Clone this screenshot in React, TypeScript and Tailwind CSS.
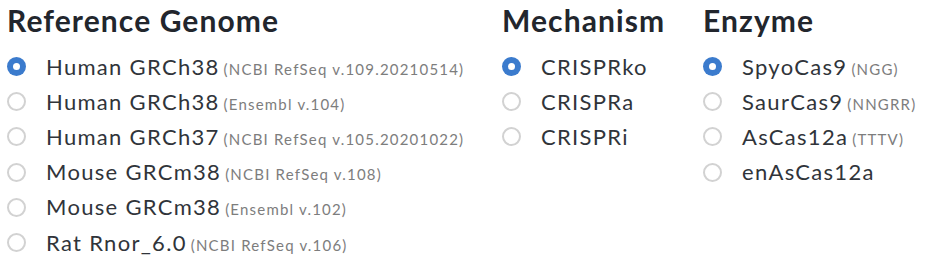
import React, { useState } from 'react';

interface Option {
  value: string;
  label: string;
  note?: string;
}

const genomeOptions: Option[] = [
  { value: 'grch38-ncbi', label: 'Human GRCh38', note: '(NCBI RefSeq v.109.20210514)' },
  { value: 'grch38-ens', label: 'Human GRCh38', note: '(Ensembl v.104)' },
  { value: 'grch37-ncbi', label: 'Human GRCh37', note: '(NCBI RefSeq v.105.20201022)' },
  { value: 'grcm38-ncbi', label: 'Mouse GRCm38', note: '(NCBI RefSeq v.108)' },
  { value: 'grcm38-ens', label: 'Mouse GRCm38', note: '(Ensembl v.102)' },
  { value: 'rnor6', label: 'Rat Rnor_6.0', note: '(NCBI RefSeq v.106)' }
];

const mechanismOptions: Option[] = [
  { value: 'ko', label: 'CRISPRko' },
  { value: 'a', label: 'CRISPRa' },
  { value: 'i', label: 'CRISPRi' }
];

const enzymeOptions: Option[] = [
  { value: 'spyo', label: 'SpyoCas9', note: '(NGG)' },
  { value: 'saur', label: 'SaurCas9', note: '(NNGRR)' },
  { value: 'as', label: 'AsCas12a', note: '(TTTV)' },
  { value: 'enas', label: 'enAsCas12a' }
];

function RadioGroup({
  title,
  options,
  value,
  onChange,
  className
}: {
  title: string;
  options: Option[];
  value: string;
  onChange: (v: string) => void;
  className?: string;
}) {
  return (
    <div className={className}>
      <h2 className="text-[30px] font-bold leading-[34px] tracking-[1.1px] text-[#22262d]">{title}</h2>
      <div className="mt-[12px] flex flex-col">
        {options.map((opt) => {
          const checked = opt.value === value;
          return (
            <label
              key={opt.value}
              className="flex h-[35.2px] cursor-pointer items-center"
              onClick={() => onChange(opt.value)}
            >
              {checked ? (
                <span className="flex h-[19px] w-[19px] shrink-0 items-center justify-center rounded-full bg-[#3b7bcd]">
                  <span className="h-[7px] w-[7px] rounded-full bg-white" />
                </span>
              ) : (
                <span className="h-[19px] w-[19px] shrink-0 rounded-full border-2 border-[#d2d2d2] bg-white" />
              )}
              <span className="ml-[20px] whitespace-nowrap text-[22px] leading-none tracking-[1.3px] text-[#30343a]">
                {opt.label}
                {opt.note && (
                  <span className="ml-[4px] text-[15px] tracking-[1.2px] text-[#7d7d7d]">{opt.note}</span>
                )}
              </span>
            </label>
          );
        })}
      </div>
    </div>
  );
}

export default function App() {
  const [genome, setGenome] = useState('grch38-ncbi');
  const [mechanism, setMechanism] = useState('ko');
  const [enzyme, setEnzyme] = useState('spyo');

  return (
    <div
      className="flex h-[275px] w-[935px] bg-white pl-[7px] pt-[3px]"
      style={{ fontFamily: 'Lato, "Open Sans", sans-serif' }}
    >
      <RadioGroup
        className="w-[495px]"
        title="Reference Genome"
        options={genomeOptions}
        value={genome}
        onChange={setGenome}
      />
      <RadioGroup
        className="w-[201px]"
        title="Mechanism"
        options={mechanismOptions}
        value={mechanism}
        onChange={setMechanism}
      />
      <RadioGroup title="Enzyme" options={enzymeOptions} value={enzyme} onChange={setEnzyme} />
    </div>
  );
}
